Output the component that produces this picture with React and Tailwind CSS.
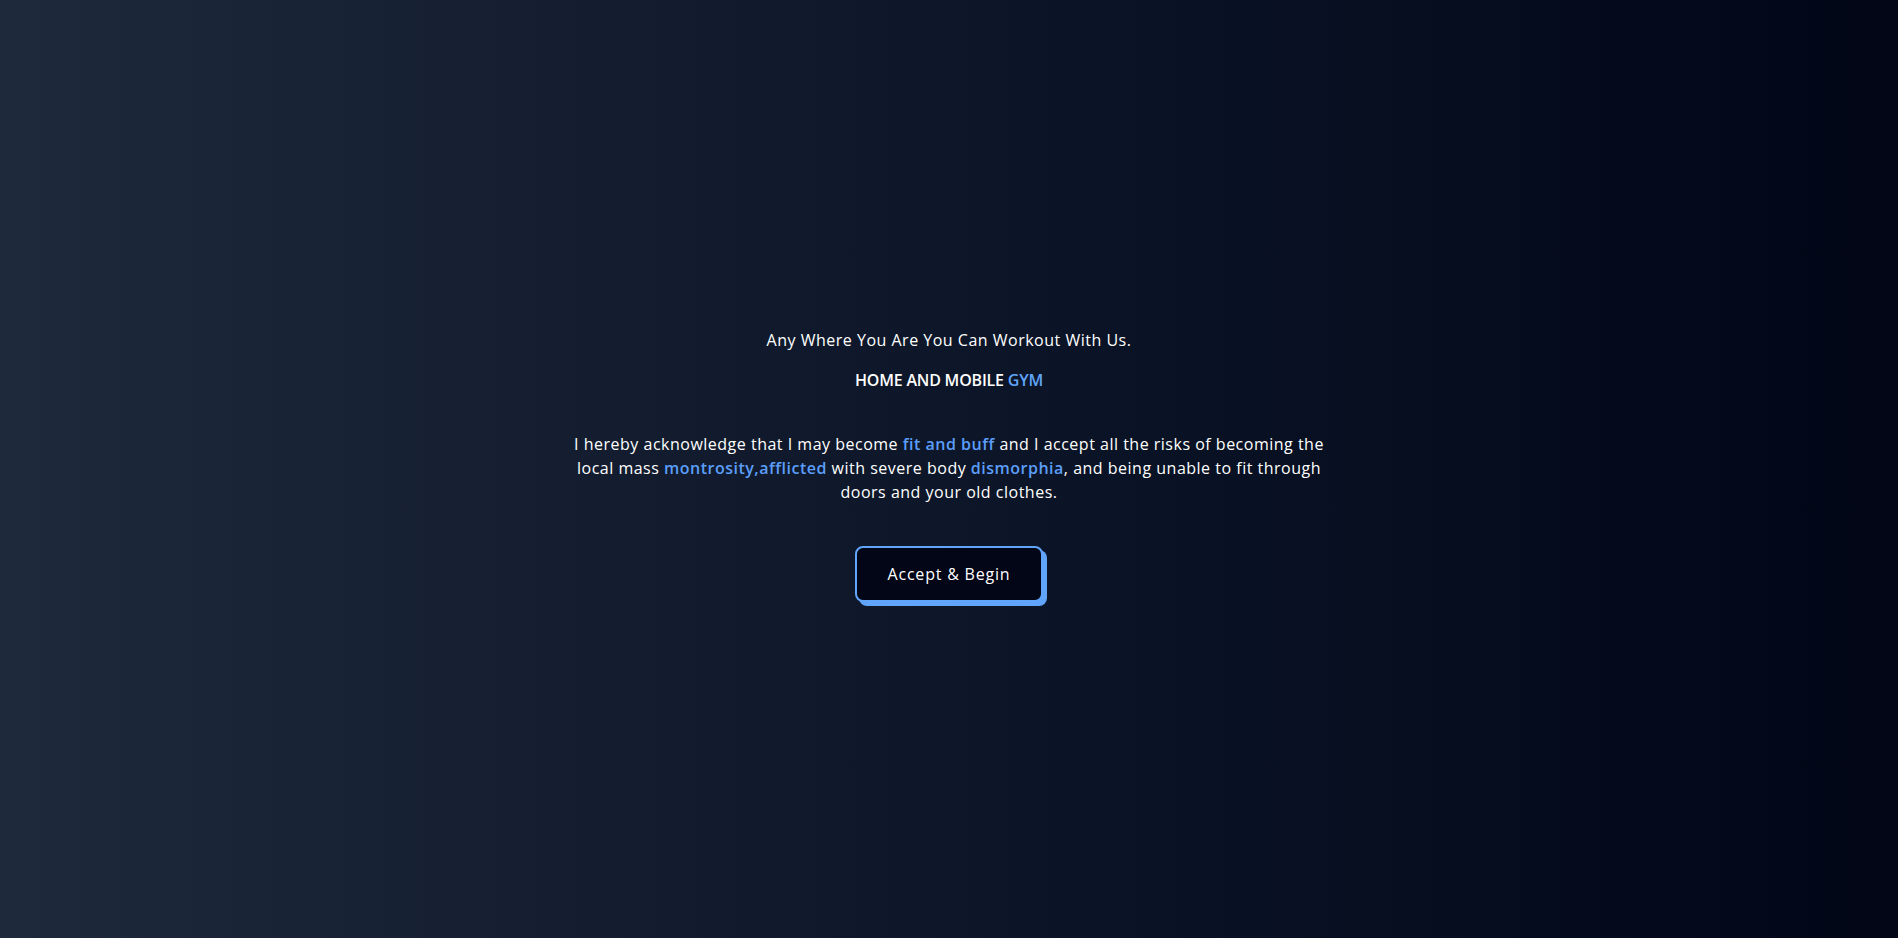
export default function App() {
  return (
    <div
      className="min-h-screen w-full flex items-center justify-center bg-gradient-to-r from-[#1e293b] to-[#020617] text-white pb-2"
      style={{ fontFamily: '"Open Sans", "Liberation Sans", sans-serif' }}
    >
      <div className="flex flex-col items-center text-center tracking-[0.5px]">
        <p className="text-base leading-6 font-medium">Any Where You Are You Can Workout With Us.</p>
        <p className="mt-4 text-base leading-6 font-semibold tracking-[-0.2px]">
          HOME AND MOBILE <span className="text-[#60a5fa]">GYM</span>
        </p>
        <p className="mt-10 text-base leading-6 font-normal">
          I hereby acknowledge that I may become <span className="text-[#5b9ef9] font-semibold">fit and buff</span> and I accept all the risks of becoming the
          <br />
          local mass <span className="text-[#5b9ef9] font-semibold">montrosity,afflicted</span> with severe body <span className="text-[#5b9ef9] font-semibold">dismorphia</span>, and being unable to fit through
          <br />
          doors and your old clothes.
        </p>
        <button className="mt-[42px] rounded-lg border-2 border-[#60a5fa] bg-[#020617] px-[31px] py-[14px] text-base leading-6 font-medium tracking-[0.8px] text-white shadow-[4px_4px_0_#60a5fa]">
          Accept &amp; Begin
        </button>
      </div>
    </div>
  );
}
